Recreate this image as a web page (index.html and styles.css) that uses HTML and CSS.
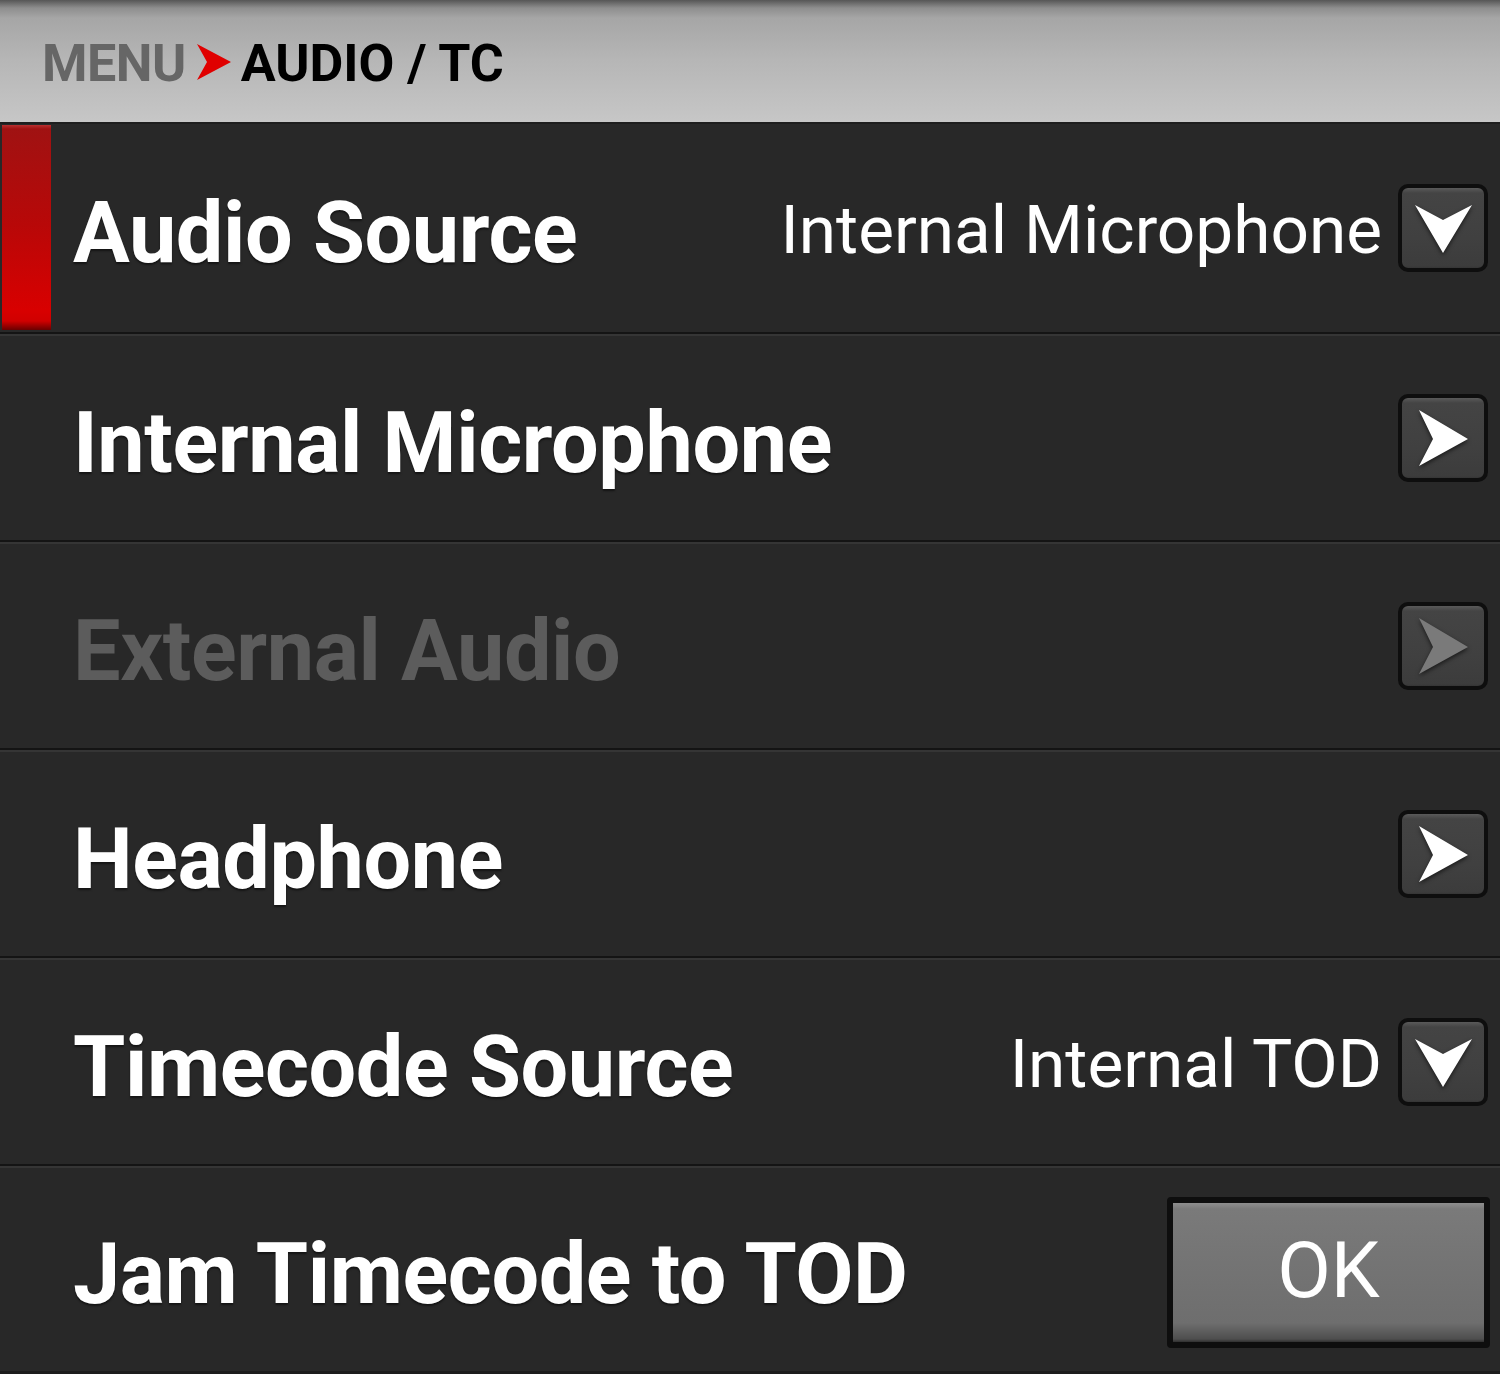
FILE: index.html
```html
<!DOCTYPE html>
<html>
<head>
<meta charset="utf-8">
<link rel="stylesheet" href="styles.css">
</head>
<body>
<div class="screen">
  <header class="crumb">
    <span class="crumb-root">MENU</span>
    <svg class="crumb-arrow" width="34" height="36" viewBox="0 0 34 36"><polygon points="0,0 34,18 0,36 10,18" fill="#e00000"/></svg>
    <span class="crumb-current">AUDIO / TC</span>
  </header>
  <div class="row selected">
    <div class="sel-bar"></div>
    <span class="label">Audio Source</span>
    <span class="value">Internal Microphone</span>
    <div class="btn"><svg width="90" height="88" viewBox="0 0 90 88"><polygon points="17,21 45,36 74,21 45,69" fill="#fff"/></svg></div>
  </div>
  <div class="row">
    <span class="label">Internal Microphone</span>
    <div class="btn"><svg width="90" height="88" viewBox="0 0 90 88"><polygon points="21,16 70,45 21,72 35,45" fill="#fff"/></svg></div>
  </div>
  <div class="row disabled">
    <span class="label">External Audio</span>
    <div class="btn"><svg width="90" height="88" viewBox="0 0 90 88"><polygon points="21,16 70,45 21,72 35,45" fill="#7a7a7a"/></svg></div>
  </div>
  <div class="row">
    <span class="label">Headphone</span>
    <div class="btn"><svg width="90" height="88" viewBox="0 0 90 88"><polygon points="21,16 70,45 21,72 35,45" fill="#fff"/></svg></div>
  </div>
  <div class="row">
    <span class="label">Timecode Source</span>
    <span class="value">Internal TOD</span>
    <div class="btn"><svg width="90" height="88" viewBox="0 0 90 88"><polygon points="17,21 45,36 74,21 45,69" fill="#fff"/></svg></div>
  </div>
  <div class="row last">
    <span class="label">Jam Timecode to TOD</span>
    <div class="ok"><span>OK</span></div>
  </div>
</div>
</body>
</html>
```

FILE: styles.css
```css
html, body {
  margin: 0;
  padding: 0;
  background: #282828;
}
.screen {
  width: 1500px;
  height: 1374px;
  overflow: hidden;
  display: flex;
  flex-direction: column;
  font-family: Roboto, "Liberation Sans", sans-serif;
}
.crumb {
  height: 124px;
  box-sizing: border-box;
  display: flex;
  align-items: center;
  padding-left: 42px;
  padding-top: 4px;
  background: linear-gradient(to bottom, #565656 0px, #8e8e8e 8px, #a6a6a6 18px, #b6b6b6 60px, #c6c6c6 120px, #c8c8c8 122px);
  border-bottom: 2px solid #1e1e1e;
  flex-shrink: 0;
}
.crumb-root {
  font-weight: 700;
  font-size: 52px;
  color: #666666;
  letter-spacing: -0.5px;
}
.crumb-arrow {
  margin-left: 11px;
  margin-right: 10px;
  margin-top: -2px;
}
.crumb-current {
  font-weight: 700;
  font-size: 52px;
  color: #000;
}
.row {
  position: relative;
  height: 208px;
  flex-shrink: 0;
  box-sizing: border-box;
  display: flex;
  align-items: center;
  padding-left: 73px;
  padding-right: 12px;
  background: #282828;
  border-top: 2px solid #353535;
  border-bottom: 2px solid #141414;
}
.row.selected {
  height: 210px;
  border-top: none;
}
.row.last {
  padding-right: 10px;
  border-bottom: 3px solid #1c1c1c;
}
.sel-bar {
  position: absolute;
  left: 2px;
  top: 1px;
  bottom: 2px;
  width: 49px;
  background: linear-gradient(to bottom, #b83030 0px, #a01212 4px, #b80808 100px, #d80000 185px, #d00000 196px, #6a0000 205px);
}
.label {
  font-weight: 700;
  font-size: 84.5px;
  letter-spacing: -0.4px;
  color: #fff;
  flex: 1;
  margin-top: 10px;
  text-shadow: 0 2px 2px rgba(0,0,0,0.5);
}
.disabled .label {
  color: #5c5c5c;
  text-shadow: none;
}
.value {
  font-weight: 400;
  font-size: 67.5px;
  color: #fff;
  margin-right: 16px;
  margin-top: 2px;
}
.btn {
  width: 90px;
  height: 88px;
  box-sizing: border-box;
  border: 4px solid #0e0e0e;
  border-radius: 10px;
  background: linear-gradient(to bottom, #5a5a5a 0px, #444 5px, #404040 50px, #3c3c3c 78px, #262626 84px);
  position: relative;
  display: flex;
  flex-shrink: 0;
}
.btn svg {
  position: absolute;
  left: -4px;
  top: -4px;
  filter: drop-shadow(0 2px 2px rgba(0,0,0,0.6));
}
.ok {
  width: 323px;
  height: 151px;
  box-sizing: border-box;
  border: 6px solid #0e0e0e;
  border-radius: 4px;
  background: linear-gradient(to bottom, #8e8e8e 0px, #7a7a7a 6px, #747474 60px, #6e6e6e 120px, #4e4e4e 136px, #303030 139px);
  display: flex;
  align-items: center;
  justify-content: center;
  flex-shrink: 0;
  margin-top: 6px;
}
.ok span {
  font-weight: 400;
  font-size: 78px;
  color: #fff;
  margin-top: -4px;
}
```
